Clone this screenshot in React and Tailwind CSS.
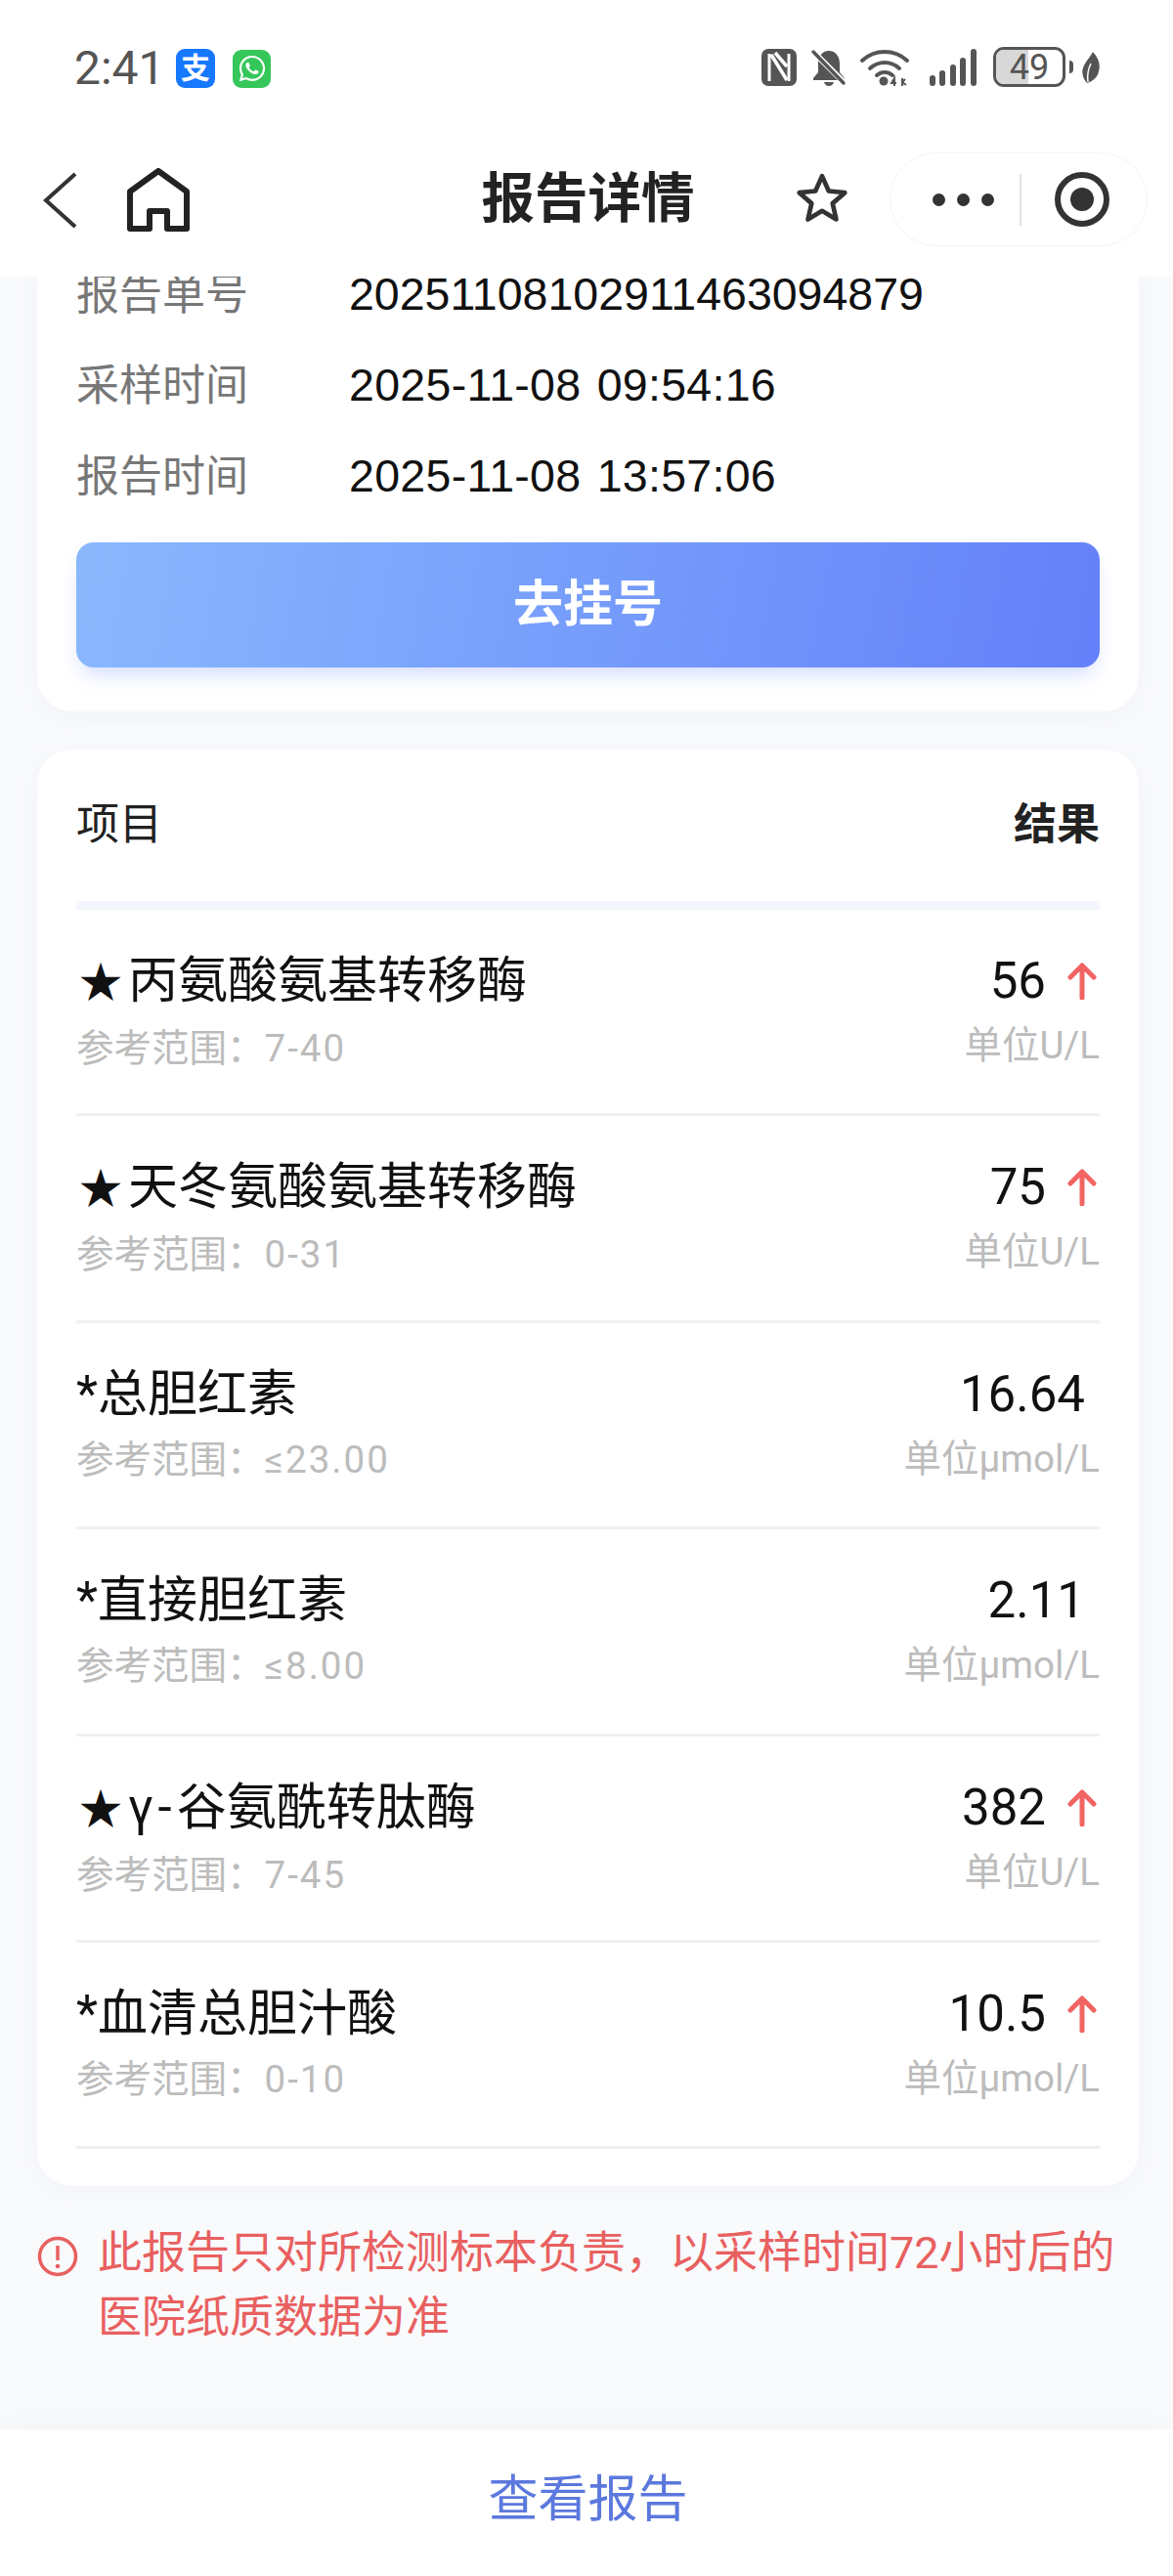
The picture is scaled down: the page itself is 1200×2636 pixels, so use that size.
import { FaWhatsapp } from "react-icons/fa";

const sans = "font-['Roboto','Noto_Sans_CJK_SC',sans-serif]";

const infoRows = [
  { label: "报告单号", value: "20251108102911463094879" },
  { label: "采样时间", value: "2025-11-08 09:54:16", isDate: true },
  { label: "报告时间", value: "2025-11-08 13:57:06", isDate: true },
];

const results = [
  { star: true, name: "丙氨酸氨基转移酶", range: "7-40", value: "56", unit: "U/L", high: true },
  { star: true, name: "天冬氨酸氨基转移酶", range: "0-31", value: "75", unit: "U/L", high: true },
  { name: "*总胆红素", range: "≤23.00", value: "16.64", unit: "μmol/L" },
  { name: "*直接胆红素", range: "≤8.00", value: "2.11", unit: "μmol/L" },
  { star: true, prefix: "γ-", name: "谷氨酰转肽酶", range: "7-45", value: "382", unit: "U/L", high: true },
  { name: "*血清总胆汁酸", range: "0-10", value: "10.5", unit: "μmol/L", high: true },
];

function StatusIcons() {
  return (
    <div className="flex items-center text-[#555]">
      {/* NFC */}
      <svg width="36" height="38" viewBox="0 0 36 38" className="mr-[14px]">
        <rect x="0" y="0" width="36" height="38" rx="7" fill="#555" />
        <path d="M8 5v28M28 5v28" stroke="#fff" strokeWidth="3" fill="none" />
        <path d="M10 6l16 26M14 4l12 14" stroke="#fff" strokeWidth="3.5" fill="none" />
      </svg>
      {/* campana silenciada */}
      <svg width="38" height="40" viewBox="0 0 38 40" className="mr-[12px]">
        <path d="M19 3c7 0 11 6 11 13v9l5 6v2H3v-2l5-6v-9C8 9 12 3 19 3z" fill="#555" />
        <path d="M14 35h10c-1 3-3 4-5 4s-4-1-5-4z" fill="#555" />
        <path d="M1 2l35 35" stroke="#fff" strokeWidth="6" />
        <path d="M3 4l31 32" stroke="#555" strokeWidth="3.5" strokeLinecap="round" />
      </svg>
      {/* wifi */}
      <svg width="52" height="40" viewBox="0 0 52 40" className="mr-[20px]" fill="none">
        <path d="M3 13C16 1 36 1 49 13" stroke="#555" strokeWidth="4" strokeLinecap="round" />
        <path d="M11 21c9-8 21-8 30 0" stroke="#555" strokeWidth="4" strokeLinecap="round" />
        <path d="M18 28c5-4 11-4 16 0" stroke="#555" strokeWidth="4" strokeLinecap="round" />
        <circle cx="25" cy="34" r="4.5" fill="#555" />
        <path d="M36 39v-8l-3 5h5M44 31v8M47 32l-3 3 4 3" stroke="#555" strokeWidth="2" />
      </svg>
      {/* cobertura */}
      <svg width="48" height="40" viewBox="0 0 48 40" className="mr-[17px]" fill="#555">
        <rect x="0" y="28" width="6" height="11" rx="3" />
        <rect x="10" y="23" width="6" height="16" rx="3" />
        <rect x="21" y="17" width="6" height="22" rx="3" />
        <rect x="31" y="10" width="6" height="29" rx="3" />
        <rect x="42" y="1" width="6" height="38" rx="3" />
      </svg>
      {/* bateria */}
      <div className="relative flex h-[41px] w-[74px] items-center justify-center overflow-hidden rounded-[11px] border-[3px] border-[#555]">
        <div className="absolute inset-y-0 left-0 w-[49%] bg-[#d8d8d8]" />
        <span className="relative text-[36px] leading-none">49</span>
      </div>
      <div className="ml-[4px] mr-[7px] h-[13px] w-[4px] rounded-r bg-[#555]" />
      <svg width="20" height="32" viewBox="0 0 20 32" fill="#555">
        <path d="M13 0c6 7 8 13 6 20-1 6-6 10-12 12C2 26 1 20 4 14 6 9 11 5 13 0z" />
        <path d="M11 12C8 18 7 24 8 31" stroke="#fff" strokeWidth="1.5" fill="none" />
      </svg>
    </div>
  );
}

function StatusBar() {
  return (
    <div className="flex h-[150px] items-start justify-between bg-white pl-[76px] pr-[75px] pt-[48px]">
      <div className="flex items-center">
        <span className="w-[104px] text-[48px] leading-[44px] text-[#555]">2:41</span>
        <div className="flex h-[40px] w-[40px] items-center justify-center rounded-[9px] bg-[#1677ff] text-[30px] font-bold leading-none text-white">
          支
        </div>
        <div className="ml-[18px] flex h-[39px] w-[39px] items-center justify-center rounded-[9px] bg-[#35c759] text-white">
          <FaWhatsapp size={30} />
        </div>
      </div>
      <StatusIcons />
    </div>
  );
}

function NavBar() {
  return (
    <div className="relative z-10 flex h-[133px] items-start bg-white pl-[44px] pt-[6px]">
      <svg width="36" height="58" viewBox="0 0 36 58" fill="none" className="mt-[20px]">
        <path d="M33 2L3 29l30 27" stroke="#333" strokeWidth="4" />
      </svg>
      <svg width="66" height="66" viewBox="0 0 66 66" fill="none" className="ml-[49px] mt-[16px]">
        <path
          d="M4 24L33 3l29 21v38H42V44H24v18H4z"
          stroke="#222"
          strokeWidth="6"
          strokeLinejoin="round"
        />
      </svg>
      <div className="absolute left-[3px] right-0 top-[21px] text-center text-[54.5px] font-bold leading-[64px] text-[#222]">
        报告详情
      </div>
      <svg width="56" height="56" viewBox="0 0 24 24" fill="none" className="absolute left-[813px] top-[25px]">
        <path
          d="M12 2.2l2.9 6.6 7.1.7-5.4 4.7 1.6 7-6.2-3.7-6.2 3.7 1.6-7L2 9.5l7.1-.7z"
          stroke="#333"
          strokeWidth="2"
          strokeLinejoin="round"
        />
      </svg>
      <div className="absolute left-[910px] top-[6px] flex h-[96px] w-[264px] items-center rounded-full border border-[#f4f4f4] pl-[43px]">
        <div className="flex gap-[12px]">
          <span className="h-[13px] w-[13px] rounded-full bg-[#333]" />
          <span className="h-[13px] w-[13px] rounded-full bg-[#333]" />
          <span className="h-[13px] w-[13px] rounded-full bg-[#333]" />
        </div>
        <div className="ml-[26px] h-[53px] w-[2px] bg-[#e2e2e2]" />
        <div className="ml-[34px] flex h-[56px] w-[56px] items-center justify-center rounded-full border-[6px] border-[#333]">
          <span className="h-[24px] w-[24px] rounded-full bg-[#333]" />
        </div>
      </div>
    </div>
  );
}

function ResultRow({ item }) {
  return (
    <div className="flex h-[211.4px] justify-between border-b-[3px] border-[#f0f0f0] pt-[43px]">
      <div>
        <div className="text-[51px] leading-[60px] text-[#111]">
          {item.star && <span className="inline-block w-[53px] pl-[3px] text-[44px]">★</span>}
          {item.prefix && <span className="tracking-[5px]">{item.prefix}</span>}
          {item.name}
        </div>
        <div className="mt-[13px] text-[38.5px] leading-[48px] text-[#bcbcbc]">
          参考范围：<span className="tracking-[2px]">{item.range}</span>
        </div>
      </div>
      <div className="flex flex-col items-end">
        <div className={`flex h-[60px] items-center ${item.high ? "pr-[3px]" : "pr-[15px]"}`}>
          <span className="text-[51px] leading-[60px] text-[#111]">{item.value}</span>
          {item.high && (
            <svg width="30" height="38" viewBox="0 0 30 38" fill="none" className="ml-[22px]">
              <path
                d="M15 36V3M3 15L15 3l12 12"
                stroke="#f26464"
                strokeWidth="5"
                strokeLinecap="round"
                strokeLinejoin="round"
              />
            </svg>
          )}
        </div>
        <div className="mt-[12px] text-[38.5px] leading-[48px] text-[#bcbcbc]">单位{item.unit}</div>
      </div>
    </div>
  );
}

export default function App() {
  return (
    <div className={`flex h-[2636px] w-[1200px] flex-col bg-[#f9fafc] ${sans}`}>
      <StatusBar />
      <NavBar />

      <main className="-mt-[13px] flex-1 pl-[38px] pr-[35px]">
        {/* Datos del informe */}
        <div className="rounded-b-[36px] bg-white px-[40px] pb-[45px] shadow-[0_6px_20px_rgba(220,226,240,0.25)]">
          <div className="flex flex-col gap-[29px] pb-[35px]">
            {infoRows.map((r) => (
              <div key={r.label} className="flex h-[64px] items-center">
                <span className="w-[279px] text-[44px] text-[#777]">{r.label}</span>
                <span
                  className={`font-['Liberation_Sans',sans-serif] text-[46.5px] text-[#111] ${
                    r.isDate ? "tracking-[0.3px] [word-spacing:3px]" : ""
                  }`}
                >
                  {r.value}
                </span>
              </div>
            ))}
          </div>
          <button className="flex h-[128px] w-full items-center justify-center rounded-[18px] bg-[linear-gradient(100deg,#8ab8fd,#7ba5fc_35%,#6480f9)] text-[51px] font-bold text-white shadow-[0_12px_20px_-6px_rgba(120,150,250,0.35)]">
            去挂号
          </button>
        </div>

        {/* Resultados */}
        <div className="mt-[39px] rounded-[36px] bg-white px-[40px] pb-[38px] shadow-[0_6px_20px_rgba(220,226,240,0.25)]">
          <div className="flex h-[164px] items-end justify-between border-b-[9px] border-[#f3f6fd] pb-[50px]">
            <span className="text-[44px] leading-[56px] text-[#222]">项目</span>
            <span className="text-[44px] font-bold leading-[56px] text-[#222]">结果</span>
          </div>
          {results.map((item) => (
            <ResultRow key={item.name} item={item} />
          ))}
        </div>

        {/* Aviso */}
        <div className="mt-[36px] flex">
          <svg width="42" height="42" viewBox="0 0 42 42" fill="none" className="mt-[15px] shrink-0">
            <circle cx="21" cy="21" r="18.5" stroke="#e86060" strokeWidth="3.5" />
            <path d="M21 10v15" stroke="#e86060" strokeWidth="3.5" />
            <circle cx="21" cy="31" r="2.3" fill="#e86060" />
          </svg>
          <p className="ml-[20px] w-[1064px] text-[45px] leading-[66px] text-[#e86060]">
            此报告只对所检测标本负责，以采样时间72小时后的医院纸质数据为准
          </p>
        </div>
      </main>

      <footer className="flex h-[150px] items-center justify-center bg-white pb-[6px] pl-[3px] text-[51px] text-[#5b78dd] shadow-[0_-10px_24px_rgba(0,0,0,0.025)]">
        查看报告
      </footer>
    </div>
  );
}
